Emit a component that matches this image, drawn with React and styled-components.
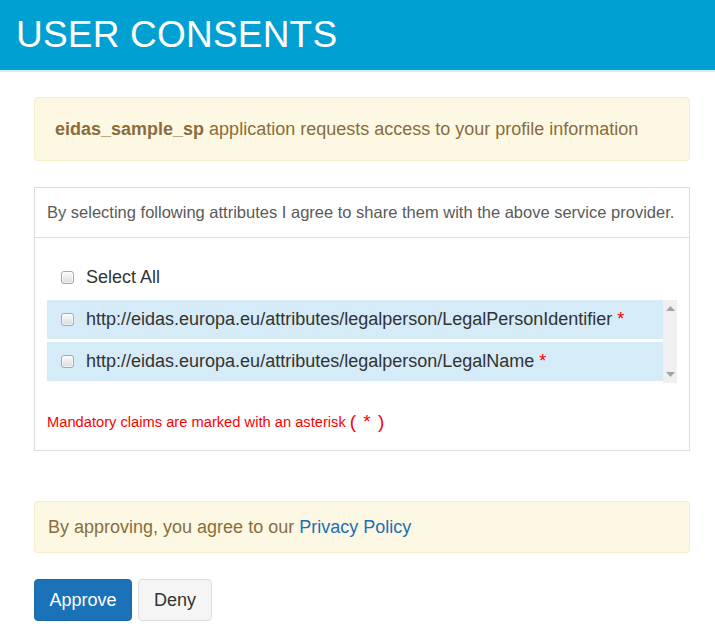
import React from "react";
import styled, { createGlobalStyle } from "styled-components";

const Global = createGlobalStyle`
  html, body { margin: 0; padding: 0; background: #fff; }
  body { font-family: "Liberation Sans", Arial, sans-serif; color: #333; }
`;

const Header = styled.header`
  height: 70px;
  background: #00a0d2;
  border-bottom: 2px solid #d3ecf7;
  display: flex;
  align-items: center;
  padding-left: 16px;
`;

const Title = styled.h1`
  margin: 0;
  font-weight: 400;
  font-size: 37px;
  color: #fff;
  letter-spacing: 0.2px;
`;

const Container = styled.main`
  padding: 25px 25px 0 34px;
  display: flex;
  flex-direction: column;
`;

const Alert = styled.div`
  background: #fcf8e3;
  border: 1px solid #faebcc;
  border-radius: 4px;
  color: #8a6d3b;
  font-size: 18px;
  height: ${(p) => p.$h}px;
  box-sizing: border-box;
  display: flex;
  align-items: center;
  padding-left: ${(p) => p.$pl}px;
  margin-bottom: ${(p) => p.$mb}px;
`;

const Strong = styled.b`
  font-weight: 700;
`;

const Link = styled.a`
  color: #1c6fb5;
  text-decoration: none;
  margin-left: 5px;
`;

const Panel = styled.section`
  border: 1px solid #dddddd;
  height: 264px;
  box-sizing: border-box;
  display: flex;
  flex-direction: column;
  margin-bottom: 50px;
`;

const PanelHeading = styled.div`
  height: 49px;
  border-bottom: 1px solid #dddddd;
  display: flex;
  align-items: center;
  padding-left: 12px;
  font-size: 16.5px;
  color: #5a5a5a;
`;

const PanelBody = styled.div`
  padding: 25px 12px 0 12px;
  display: flex;
  flex-direction: column;
`;

const Check = styled.span`
  width: 11px;
  height: 11px;
  border: 1px solid #a8a8a8;
  border-radius: 3px;
  background: linear-gradient(#fdfdfd, #dadada);
  box-shadow: inset 0 0 0 1px rgba(255,255,255,0.6);
  flex: none;
`;

const SelectRow = styled.label`
  display: flex;
  align-items: center;
  gap: 12px;
  padding-left: 14px;
  height: 28px;
  font-size: 18px;
  color: #333;
  margin-bottom: 9px;
`;

const ListWrap = styled.div`
  display: grid;
  grid-template-columns: 1fr 14px;
  height: 83px;
`;

const Items = styled.div`
  display: flex;
  flex-direction: column;
  gap: 3px;
`;

const Item = styled.label`
  height: 39px;
  background: #d5ebf7;
  display: flex;
  align-items: center;
  gap: 12px;
  padding-left: 14px;
  font-size: 18px;
  color: #333;
`;

const Star = styled.span`
  color: #ff0000;
  margin-left: 5px;
`;

const Scrollbar = styled.div`
  background: #f0f0f0;
  display: flex;
  flex-direction: column;
  justify-content: space-between;
  align-items: center;
  padding: 6px 0 6px;
`;

const Note = styled.p`
  margin: 28px 0 0 0;
  color: #ff0000;
  font-size: 14.7px;
  display: flex;
  align-items: center;
`;

const Paren = styled.span`
  font-size: 19px;
  margin-left: 4px;
  letter-spacing: 1px;
  white-space: pre;
`;

const Buttons = styled.div`
  display: flex;
  gap: 6px;
`;

const Button = styled.button`
  height: 42px;
  padding: 0 ${(p) => p.$px}px;
  font-family: "Liberation Sans", Arial, sans-serif;
  font-size: 18px;
  border-radius: 4px;
  border: 1px solid ${(p) => (p.$primary ? "#1a69a9" : "#dcdcdc")};
  background: ${(p) => (p.$primary ? "#1c72b8" : "#f5f5f5")};
  color: ${(p) => (p.$primary ? "#fff" : "#333")};
`;

const Tri = ({ up }) => (
  <svg width="9" height="5" viewBox="0 0 9 5">
    <path d={up ? "M0 5 L4.5 0 L9 5 Z" : "M0 0 L4.5 5 L9 0 Z"} fill="#a3a3a3" />
  </svg>
);

export default function App() {
  return (
    <>
      <Global />
      <Header>
        <Title>USER CONSENTS</Title>
      </Header>
      <Container>
        <Alert $h={64} $pl={20} $mb={26}>
          <span>
            <Strong>eidas_sample_sp</Strong> application requests access to your profile information
          </span>
        </Alert>
        <Panel>
          <PanelHeading>
            By selecting following attributes I agree to share them with the above service provider.
          </PanelHeading>
          <PanelBody>
            <SelectRow>
              <Check />
              Select All
            </SelectRow>
            <ListWrap>
              <Items>
                <Item>
                  <Check />
                  <span>
                    http://eidas.europa.eu/attributes/legalperson/LegalPersonIdentifier
                    <Star>*</Star>
                  </span>
                </Item>
                <Item>
                  <Check />
                  <span>
                    http://eidas.europa.eu/attributes/legalperson/LegalName
                    <Star>*</Star>
                  </span>
                </Item>
              </Items>
              <Scrollbar>
                <Tri up />
                <Tri />
              </Scrollbar>
            </ListWrap>
            <Note>
              Mandatory claims are marked with an asterisk
              <Paren>( * )</Paren>
            </Note>
          </PanelBody>
        </Panel>
        <Alert $h={52} $pl={13} $mb={26}>
          <span>
            By approving, you agree to our
            <Link href="#">Privacy Policy</Link>
          </span>
        </Alert>
        <Buttons>
          <Button $primary $px={14.5}>Approve</Button>
          <Button $px={15}>Deny</Button>
        </Buttons>
      </Container>
    </>
  );
}
